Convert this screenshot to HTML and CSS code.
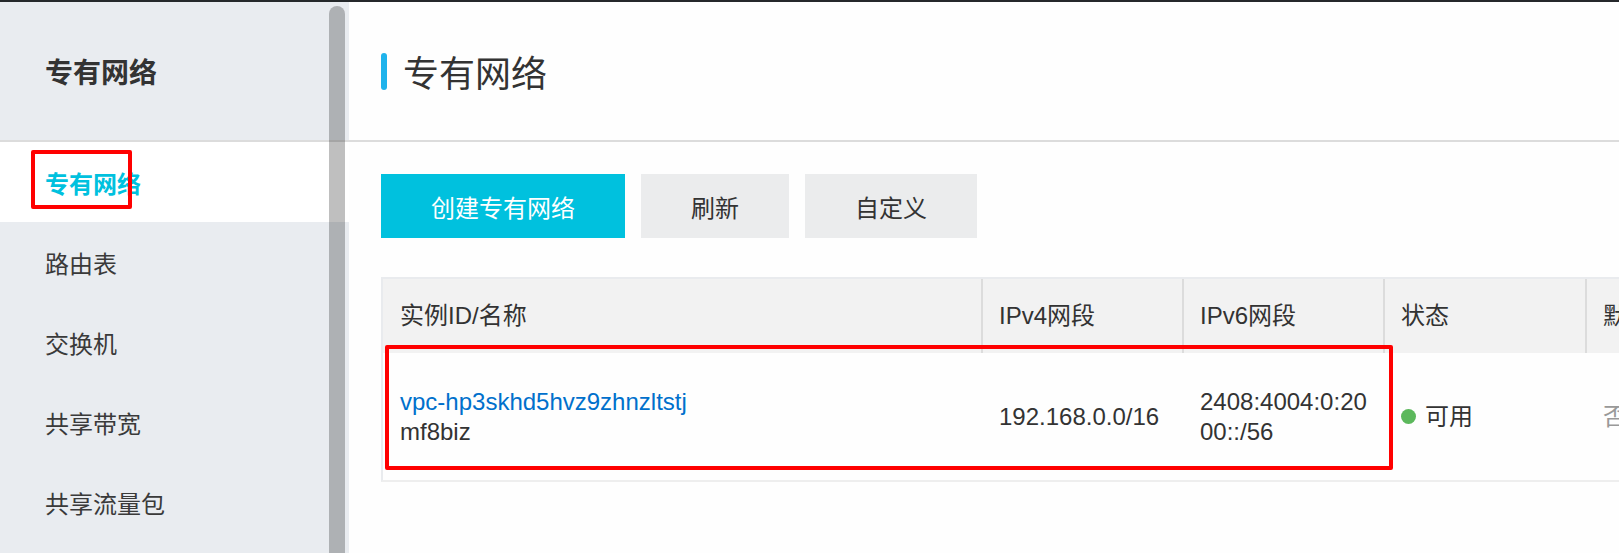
FILE: index.html
```html
<!DOCTYPE html>
<html lang="zh-CN">
<head>
    <meta charset="UTF-8">
    <meta name="viewport" content="width=device-width, initial-scale=1.0">
    <title>专有网络</title>
    <link rel="stylesheet" href="styles.css">
</head>
<body>
    <div class="topbar"></div>
    <div class="layout">
        <aside class="sidebar">
            <div class="sidebar-title">专有网络</div>
            <ul class="nav">
                <li class="nav-item active">专有网络<span class="mark mark-nav"></span></li>
                <li class="nav-item">路由表</li>
                <li class="nav-item">交换机</li>
                <li class="nav-item">共享带宽</li>
                <li class="nav-item">共享流量包</li>
            </ul>
            <div class="scroll-thumb"></div>
        </aside>

        <main class="content">
            <div class="page-header">
                <h1 class="page-title">专有网络</h1>
            </div>

            <div class="toolbar">
                <button class="btn btn-primary">创建专有网络</button>
                <button class="btn btn-refresh">刷新</button>
                <button class="btn btn-custom">自定义</button>
            </div>

            <div class="table">
                <div class="row head">
                    <div class="cell">实例ID/名称</div>
                    <div class="cell">IPv4网段</div>
                    <div class="cell">IPv6网段</div>
                    <div class="cell">状态</div>
                    <div class="cell">默认专有网络</div>
                </div>
                <div class="row body">
                    <div class="cell">
                        <a class="vpc-id" href="#">vpc-hp3skhd5hvz9zhnzltstj</a>
                        <span class="vpc-name">mf8biz</span>
                    </div>
                    <div class="cell">192.168.0.0/16</div>
                    <div class="cell ipv6">2408:4004:0:2000::/56</div>
                    <div class="cell"><span class="dot"></span>可用</div>
                    <div class="cell muted">否</div>
                </div>
                <span class="mark mark-row"></span>
            </div>
        </main>
    </div>
</body>
</html>
```

FILE: styles.css
```css
* {
    box-sizing: border-box;
}
body {
    margin: 0;
    font-family: "Liberation Sans", "Noto Sans CJK SC", sans-serif;
    color: #333;
    background-color: #fefefe;
    overflow: hidden;
}
.topbar {
    height: 2px;
    background-color: #25282b;
}
.layout {
    display: flex;
    height: calc(100vh - 2px);
}

/* sidebar */
.sidebar {
    position: relative;
    width: 349px;
    flex-shrink: 0;
    background-color: #e9ecf0;
}
.sidebar-title {
    height: 140px;
    display: flex;
    align-items: center;
    padding-left: 45px;
    font-size: 28px;
    font-weight: bold;
    border-bottom: 2px solid #dcdcdc;
}
.nav {
    list-style: none;
    margin: 0;
    padding: 0;
}
.nav-item {
    position: relative;
    height: 80px;
    display: flex;
    align-items: center;
    padding-left: 45px;
    font-size: 24px;
    color: #3a3a3a;
}
.nav-item.active {
    background-color: #fff;
    color: #00c1de;
    font-weight: bold;
}
.scroll-thumb {
    position: absolute;
    top: 4px;
    right: 4px;
    bottom: -20px;
    width: 16px;
    border-radius: 8px;
    background-color: rgba(0, 0, 0, 0.25);
}

/* red annotation boxes */
.mark {
    position: absolute;
    border: 4px solid #f00;
    border-radius: 2px;
    pointer-events: none;
}
.mark-nav {
    left: 31px;
    top: 8px;
    width: 101px;
    height: 59px;
}
.mark-row {
    left: 2px;
    top: 66px;
    width: 1008px;
    height: 125px;
}

/* main */
.content {
    flex: 1;
    min-width: 0;
    overflow: hidden;
}
.page-header {
    height: 140px;
    display: flex;
    align-items: center;
    padding-left: 32px;
    border-bottom: 2px solid #dcdcdc;
}
.page-title {
    display: flex;
    align-items: center;
    margin: 0;
    font-size: 36px;
    font-weight: normal;
    color: #333;
}
.page-title::before {
    content: "";
    width: 6px;
    height: 37px;
    margin-right: 16px;
    border-radius: 3px;
    background-color: #1fb3ec;
}
.toolbar {
    display: flex;
    gap: 16px;
    margin-top: 32px;
    padding-left: 32px;
}
.btn {
    height: 64px;
    border: none;
    font-family: inherit;
    font-size: 24px;
    color: #333;
    background-color: #ebeced;
    cursor: pointer;
}
.btn-primary {
    width: 244px;
    color: #fff;
    background-color: #00c1de;
}
.btn-refresh {
    width: 148px;
}
.btn-custom {
    width: 172px;
}

/* table */
.table {
    position: relative;
    width: 1420px;
    margin: 39px 0 0 32px;
    border: 2px solid #e9ebee;
    border-bottom-color: #eeeeee;
}
.row {
    display: grid;
    grid-template-columns: 598px 201px 201px 202px 214px;
}
.head {
    height: 74px;
    background-color: #f2f2f2;
}
.head .cell + .cell {
    border-left: 2px solid #dcdcdc;
}
.body {
    height: 127px;
}
.cell {
    display: flex;
    align-items: center;
    padding: 0 12px 0 17px;
    font-size: 24px;
    line-height: 30px;
    white-space: nowrap;
    color: #333;
}
.head .cell + .cell,
.body .cell + .cell {
    padding-left: 16px;
}
.body .cell + .cell {
    border-left: 2px solid transparent;
}
.body .cell:first-child {
    flex-direction: column;
    align-items: flex-start;
    justify-content: center;
}
.vpc-id {
    color: #0070cc;
    text-decoration: none;
}
.vpc-name {
    color: #333;
}
.ipv6 {
    white-space: normal;
    word-break: break-all;
}
.dot {
    width: 15px;
    height: 15px;
    margin-right: 9px;
    border-radius: 50%;
    background-color: #5cb85c;
    flex-shrink: 0;
}
.muted {
    color: #999;
}
```
